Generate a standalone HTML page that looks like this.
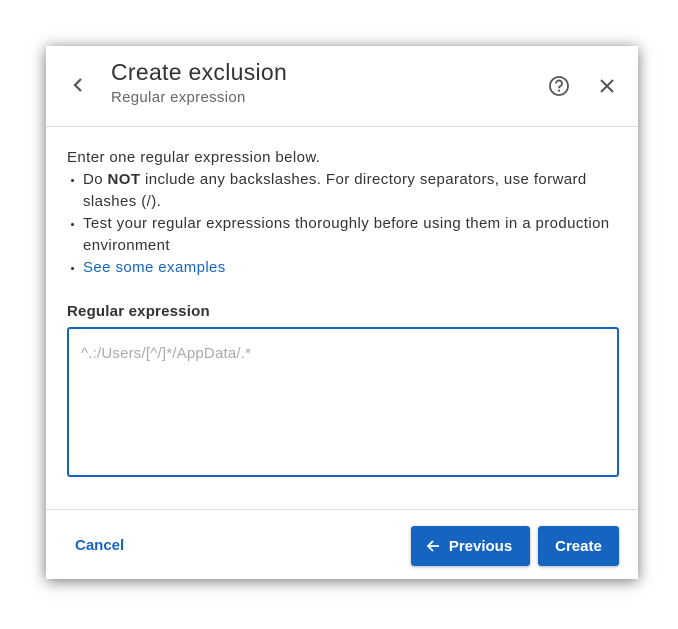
<!DOCTYPE html>
<html><head><style>
*{box-sizing:border-box;margin:0;padding:0}
body{width:678px;height:629px;background:#fff;font-family:"Liberation Sans",sans-serif;position:relative;overflow:hidden}
.dlg{position:absolute;left:46px;top:46px;width:592px;height:533px;background:#fff;box-shadow:0 2px 14px rgba(0,0,0,.55)}
.t{position:absolute;color:#333}
.hr{position:absolute;left:0;width:592px;height:1px;background:#dcdcdc}
.btn{position:absolute;top:480px;height:40px;background:#1565c0;border-radius:3px;color:#fff;font-weight:bold;font-size:15px;line-height:42px;text-align:center;box-shadow:0 1px 3px rgba(0,0,0,.3)}
.b{position:absolute;left:4px;top:10px;width:3px;height:3px;border-radius:50%;background:#333}
</style></head><body>
<div class="dlg">
<svg style="position:absolute;left:26px;top:31px" width="12" height="16" viewBox="0 0 12 16"><path d="M9 2L3 8l6 6" fill="none" stroke="#555" stroke-width="2.2"/></svg>
<div class="t" style="left:65px;top:13px;font-size:23px;letter-spacing:.3px">Create exclusion</div>
<div class="t" style="left:65px;top:43px;font-size:15px;color:#666;letter-spacing:.3px">Regular expression</div>
<svg style="position:absolute;left:502px;top:29px" width="22" height="22" viewBox="0 0 22 22"><circle cx="11" cy="11" r="9" fill="none" stroke="#555" stroke-width="1.8"/><path d="M8 8.5a3 3 0 1 1 4.2 2.7c-.8.4-1.2 1-1.2 2" fill="none" stroke="#555" stroke-width="1.8"/><circle cx="11" cy="15.6" r="1.1" fill="#555"/></svg>
<svg style="position:absolute;left:553px;top:32px" width="16" height="16" viewBox="0 0 16 16"><path d="M2 2l12 12M14 2L2 14" stroke="#555" stroke-width="2"/></svg>
<div class="hr" style="top:80px"></div>
<div class="t" style="left:21px;top:101px;font-size:15px;line-height:22px;width:560px;letter-spacing:.4px">
Enter one regular expression below.<br>
<div style="padding-left:16px;position:relative;width:540px"><span class="b"></span>Do <b>NOT</b> include any backslashes. For directory separators, use forward slashes (/).</div>
<div style="padding-left:16px;position:relative"><span class="b"></span>Test your regular expressions thoroughly before using them in a production environment</div>
<div style="padding-left:16px;position:relative"><span class="b"></span><span style="color:#1565c0">See some examples</span></div>
</div>
<div class="t" style="left:21px;top:257px;font-size:15px;font-weight:bold;letter-spacing:.2px">Regular expression</div>
<div style="position:absolute;left:21px;top:281px;width:552px;height:150px;border:2px solid #1565c0;border-radius:3px"></div>
<div class="t" style="left:35px;top:299px;font-size:15px;color:#aaa;letter-spacing:.2px">^.:/Users/[^/]*/AppData/.*</div>
<div class="hr" style="top:463px"></div>
<div class="t" style="left:29px;top:491px;font-size:15px;font-weight:bold;color:#1565c0">Cancel</div>
<div class="btn" style="left:365px;width:119px"><svg style="position:absolute;left:15px;top:13px" width="14" height="14" viewBox="0 0 14 14"><path d="M13 7H2M7 2L2 7l5 5" fill="none" stroke="#fff" stroke-width="1.8"/></svg><span style="padding-left:20px">Previous</span></div>
<div class="btn" style="left:492px;width:81px">Create</div>
</div>
</body></html>
